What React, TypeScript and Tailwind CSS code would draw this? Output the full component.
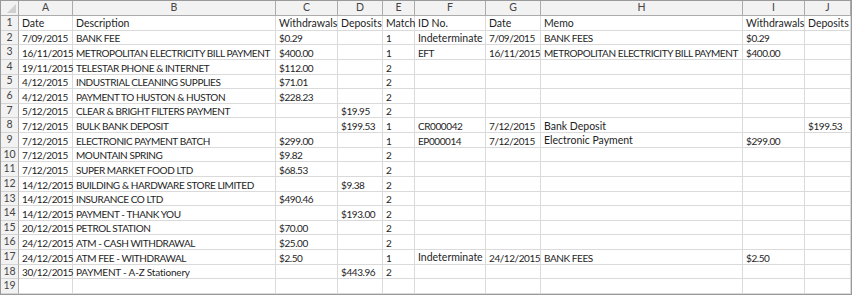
import React from 'react';

const cols = ['A', 'B', 'C', 'D', 'E', 'F', 'G', 'H', 'I', 'J'];

const rows: string[][] = [
  ['Date', 'Description', 'Withdrawals', 'Deposits', 'Match', 'ID No.', 'Date', 'Memo', 'Withdrawals', 'Deposits'],
  ['7/09/2015', 'BANK FEE', '$0.29', '', '1', 'Indeterminate', '7/09/2015', 'BANK FEES', '$0.29', ''],
  ['16/11/2015', 'METROPOLITAN ELECTRICITY BILL PAYMENT', '$400.00', '', '1', 'EFT', '16/11/2015', 'METROPOLITAN ELECTRICITY BILL PAYMENT', '$400.00', ''],
  ['19/11/2015', 'TELESTAR PHONE & INTERNET', '$112.00', '', '2', '', '', '', '', ''],
  ['4/12/2015', 'INDUSTRIAL CLEANING SUPPLIES', '$71.01', '', '2', '', '', '', '', ''],
  ['4/12/2015', 'PAYMENT TO HUSTON & HUSTON', '$228.23', '', '2', '', '', '', '', ''],
  ['5/12/2015', 'CLEAR & BRIGHT FILTERS PAYMENT', '', '$19.95', '2', '', '', '', '', ''],
  ['7/12/2015', 'BULK BANK DEPOSIT', '', '$199.53', '1', 'CR000042', '7/12/2015', 'Bank Deposit', '', '$199.53'],
  ['7/12/2015', 'ELECTRONIC PAYMENT BATCH', '$299.00', '', '1', 'EP000014', '7/12/2015', 'Electronic Payment', '$299.00', ''],
  ['7/12/2015', 'MOUNTAIN SPRING', '$9.82', '', '2', '', '', '', '', ''],
  ['7/12/2015', 'SUPER MARKET FOOD LTD', '$68.53', '', '2', '', '', '', '', ''],
  ['14/12/2015', 'BUILDING & HARDWARE STORE LIMITED', '', '$9.38', '2', '', '', '', '', ''],
  ['14/12/2015', 'INSURANCE CO LTD', '$490.46', '', '2', '', '', '', '', ''],
  ['14/12/2015', 'PAYMENT - THANK YOU', '', '$193.00', '2', '', '', '', '', ''],
  ['20/12/2015', 'PETROL STATION', '$70.00', '', '2', '', '', '', '', ''],
  ['24/12/2015', 'ATM - CASH WITHDRAWAL', '$25.00', '', '2', '', '', '', '', ''],
  ['24/12/2015', 'ATM FEE - WITHDRAWAL', '$2.50', '', '1', 'Indeterminate', '24/12/2015', 'BANK FEES', '$2.50', ''],
  ['30/12/2015', 'PAYMENT - A-Z Stationery', '', '$443.96', '2', '', '', '', '', ''],
  ['', '', '', '', '', '', '', '', '', ''],
];

// Lato runs wider than the sheet's font on caps and digits, so pull those cells in
const fit = (v: string) => {
  if (!/[a-z]/.test(v)) return 'text-[10px] tracking-[-0.42px]';
  if (/[A-Z]{3}/.test(v)) return 'text-[10px] tracking-[-0.2px]';
  return '';
};

export default function App() {
  return (
    <div className="w-[852px] h-[295px] bg-white border border-[#9a9a9a] overflow-hidden" style={{ fontFamily: 'Lato, "Open Sans", sans-serif' }}>
      <div className="grid h-[293px] grid-cols-[18px_54px_203px_62px_45px_32px_71px_55px_202px_62px_46px] grid-rows-[15px_repeat(19,minmax(0,1fr))] text-[10.5px] text-[#1e1e1e]">
        <div className="relative bg-[#f2f2f2] border-r border-b border-[#ababab]">
          <div className="absolute right-[2px] bottom-[2px] w-0 h-0 border-l-[9px] border-l-transparent border-b-[9px] border-b-[#d0d0d0]" />
        </div>
        {cols.map((c) => (
          <div key={c} className="flex items-center justify-center bg-[#f2f2f2] border-r border-b border-[#ababab] text-[#444]">
            {c}
          </div>
        ))}
        {rows.map((r, i) => (
          <React.Fragment key={i}>
            <div className="flex items-center justify-center bg-[#f2f2f2] border-r border-b border-[#d4d4d4] border-r-[#ababab] text-[#444]">
              {i + 1}
            </div>
            {r.map((v, j) => (
              <div
                key={j}
                className={`flex items-end pl-[3px] pb-[1px] whitespace-nowrap border-r border-b border-[#dadada] leading-none ${fit(v)}`}
              >
                {v}
              </div>
            ))}
          </React.Fragment>
        ))}
      </div>
    </div>
  );
}
